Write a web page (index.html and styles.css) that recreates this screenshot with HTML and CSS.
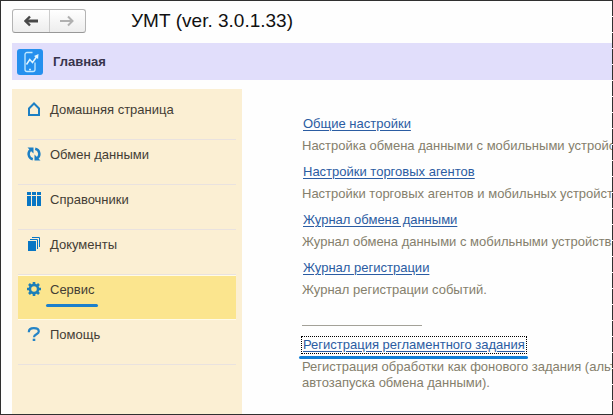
FILE: index.html
```html
<!DOCTYPE html>
<html lang="ru">
<head>
<meta charset="utf-8">
<title>УМТ (ver. 3.0.1.33)</title>
<link rel="stylesheet" href="styles.css">
</head>
<body>
<div class="window">
  <header class="toolbar">
    <div class="history">
      <button class="history-button" type="button" aria-label="Назад">
        <svg width="14" height="12" viewBox="0 0 14 12"><path d="M6 1.500 1.500 6 6 10.500" fill="none" stroke="#484848" stroke-width="2.400"/><path d="M2 6h12" stroke="#484848" stroke-width="3"/></svg>
      </button>
      <button class="history-button" type="button" aria-label="Вперёд">
        <svg width="14" height="12" viewBox="0 0 14 12"><path d="M8 1.500 12.500 6 8 10.500M12 6H0" fill="none" stroke="#b0b0b0" stroke-width="2"/></svg>
      </button>
    </div>
    <h1 class="title">УМТ (ver. 3.0.1.33)</h1>
  </header>
  <div class="section-bar">
    <svg class="logo" width="26" height="26" viewBox="0 0 26 26">
      <rect width="26" height="26" rx="3" fill="#2590ee"/>
      <path d="M15.500 3.500H10a2 2 0 0 0-2 2V20.500a2 2 0 0 0 2 2h6a2 2 0 0 0 2-2V13.500M12 20.500h2" fill="none" stroke="#c3e9ff" stroke-width="1.300"/>
      <path d="M9.500 15.500 12.800 10.500l2.700 3 4.300-6" fill="none" stroke="#e2f6ff" stroke-width="1.500"/>
      <path d="M17 7l4.500-2-.4 5z" fill="#e2f6ff"/>
    </svg>
    <h2 class="section-title">Главная</h2>
  </div>
  <div class="columns">
    <nav class="sidebar">
      <a class="nav-item" href="#home">
        <svg width="14" height="14" viewBox="0 0 14 14"><path d="M2 13V6.500L7 1.500l5 5V13z" fill="none" stroke="#1c7fc4" stroke-width="2"/></svg>
        <span class="nav-label">Домашняя страница</span>
      </a>
      <a class="nav-item" href="#exchange">
        <svg width="14" height="14" viewBox="0 0 14 14"><path d="M4.200 2.500A5.300 5.300 0 0 0 5.800 12.200M9.800 11.500A5.300 5.300 0 0 0 8.200 1.800" fill="none" stroke="#1c7fc4" stroke-width="2.500"/><path d="M.5.500H6.500V6.500zM13.500 13.500H7.500V7.500z" fill="#1c7fc4"/></svg>
        <span class="nav-label">Обмен данными</span>
      </a>
      <a class="nav-item" href="#catalogs">
        <svg width="14" height="14" viewBox="0 0 14 14"><path d="M0 0h4v3H0zM5 0h4v3H5zM10 0h4v3h-4zM0 4h4v10H0zM5 4h4v10H5zM10 4h4v10h-4z" fill="#0876c4"/></svg>
        <span class="nav-label">Справочники</span>
      </a>
      <a class="nav-item" href="#documents">
        <svg width="14" height="14" viewBox="0 0 14 14"><path d="M1 4h8v10H1z" fill="#0876c4"/><path d="M3 2.500h7.500V12M5 .500h7.500V10" fill="none" stroke="#0876c4"/></svg>
        <span class="nav-label">Документы</span>
      </a>
      <a class="nav-item nav-item-active" href="#service" aria-current="page">
        <svg width="14" height="14" viewBox="0 0 14 14"><circle cx="7" cy="7" r="4.100" fill="none" stroke="#1c7fb8" stroke-width="2.600"/><path d="M7 0v2.500M7 11.500V14M0 7h2.500M11.500 7H14M2 2l2 2M10 10l2 2M12 2l-2 2M4 10l-2 2" stroke="#1c7fb8" stroke-width="2.600"/></svg>
        <span class="nav-label">Сервис</span>
      </a>
      <a class="nav-item" href="#help">
        <svg width="14" height="14" viewBox="0 0 14 14"><path d="M1.800 5.200C1.800 2.500 4 1.200 6.800 1.200s5 1.100 5 3.300c0 2.900-4.800 2.600-4.800 5.700" fill="none" stroke="#2584c6" stroke-width="2.200"/><path d="M5.700 11.700h2.600V14H5.700z" fill="#2584c6"/></svg>
        <span class="nav-label">Помощь</span>
      </a>
    </nav>
    <main class="content">
      <section class="entry">
        <a class="entry-link" href="#settings">Общие настройки</a>
        <p class="entry-text">Настройка обмена данными с мобильными устройствами.</p>
      </section>
      <section class="entry">
        <a class="entry-link" href="#agents">Настройки торговых агентов</a>
        <p class="entry-text">Настройки торговых агентов и мобильных устройств.</p>
      </section>
      <section class="entry">
        <a class="entry-link" href="#exchange-log">Журнал обмена данными</a>
        <p class="entry-text">Журнал обмена данными с мобильными устройствами.</p>
      </section>
      <section class="entry">
        <a class="entry-link" href="#event-log">Журнал регистрации</a>
        <p class="entry-text">Журнал регистрации событий.</p>
      </section>
      <hr class="divider">
      <section class="entry">
        <a class="entry-link entry-link-focused" href="#job">Регистрация регламентного задания</a>
        <p class="entry-text">Регистрация обработки как фонового задания (альтернатива<br>автозапуска обмена данными).</p>
      </section>
    </main>
  </div>
</div>
</body>
</html>
```
FILE: styles.css
```css
* {
  box-sizing: border-box;
}

body {
  margin: 0;
  background: #fefefe;
  font-family: "Liberation Sans", Arial, sans-serif;
  font-size: 13px;
  line-height: 16px;
}

h1,
h2,
p {
  margin: 0;
}

.window {
  position: relative;
  display: flex;
  flex-direction: column;
  min-height: 100vh;
  overflow: hidden;
  border: 1px solid #303030;
  border-right: 0;
  padding: 8px 1px 0 11px;
}

/* Dashed right edge of the window frame */
.window::after {
  content: "";
  position: absolute;
  top: 0;
  right: 0;
  bottom: 0;
  width: 1px;
  background: repeating-linear-gradient(#303030 0 15px, #fefefe 15px 16px);
}

.toolbar {
  display: flex;
  align-items: center;
  gap: 45px;
  height: 24px;
}

.history {
  display: flex;
  width: 74px;
  height: 24px;
  border: 1px solid #b4b4b4;
  border-bottom-color: #989898;
  border-radius: 3px;
  background: linear-gradient(#ffffff, #ededed);
}

.history-button {
  display: flex;
  flex: 1;
  align-items: center;
  justify-content: center;
  border: 0;
  padding: 0;
  background: none;
}

.history-button + .history-button {
  border-left: 1px solid #cccccc;
}

.title {
  color: #111111;
  font-size: 19px;
  font-weight: 400;
  line-height: 24px;
}

.section-bar {
  display: flex;
  align-items: center;
  gap: 10px;
  height: 37px;
  margin-top: 10px;
  padding-left: 5px;
  background: #e1defb;
}

.section-title {
  color: #38354c;
  font-size: 13px;
  font-weight: 700;
}

.columns {
  display: flex;
  flex: 1;
  gap: 60px;
  margin-top: 9px;
}

.sidebar {
  flex: none;
  width: 230px;
  padding: 6px;
  background: #fbefd3;
}

.nav-item {
  display: flex;
  align-items: flex-start;
  gap: 9px;
  height: 45px;
  border-bottom: 1px solid #e9e2df;
  padding: 7px 9px;
  color: #433d35;
  text-decoration: none;
}

.nav-item-active {
  border-top: 1px solid #fffbe8;
  border-bottom-color: #fffbe8;
  padding-top: 6px;
  background: #fbe58e;
}

.nav-item-active .nav-label {
  position: relative;
}

.nav-item-active .nav-label::after {
  content: "";
  position: absolute;
  right: -3px;
  bottom: -9px;
  left: -4px;
  height: 3px;
  border-radius: 2px;
  background: #1b80cb;
}

.content {
  flex: 1;
  min-width: 0;
  padding-top: 27px;
  white-space: nowrap;
}

.entry {
  display: flex;
  flex-direction: column;
  align-items: flex-start;
  gap: 6px;
  margin-bottom: 10px;
}

.entry-link {
  padding: 0 1px;
  color: #2b5ca2;
  text-decoration: underline;
  text-underline-offset: 2px;
}

.entry-text {
  color: #857f6c;
}

.divider {
  width: 120px;
  height: 1px;
  margin: 27px 0 11px;
  border: 0;
  background: #a3a198;
}

.entry-link-focused {
  position: relative;
  outline: 1px dotted #000000;
}

.entry-link-focused::after {
  content: "";
  position: absolute;
  right: -2px;
  bottom: -6px;
  left: -3px;
  height: 3px;
  border-radius: 2px;
  background: #1480d8;
}
```
